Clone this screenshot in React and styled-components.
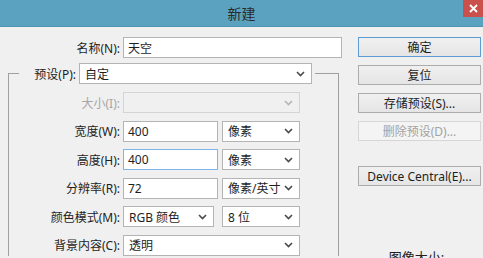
import styled, { createGlobalStyle } from "styled-components";

const Global = createGlobalStyle`
  html, body { margin: 0; padding: 0; background: #f0f0f0; overflow: hidden; }
  body { font-family: "Noto Sans", "Noto Sans CJK SC", sans-serif; font-size: 12px; color: #1e1e1e; }
`;

const Dialog = styled.div`
  width: 483px;
  height: 258px;
  background: #f0f0f0;
  overflow: hidden;
`;

const TitleBar = styled.div`
  position: relative;
  height: 27px;
  background: #5aa2bf;
  border-bottom: 1px solid #4f95b0;
  box-sizing: border-box;
  display: flex;
  align-items: center;
  justify-content: center;
  font-size: 14px;
  color: #2a2a2a;
`;

const CloseBox = styled.div`
  position: absolute;
  top: 0;
  right: 0;
  width: 20px;
  height: 17px;
  background: #c9504d;
  display: flex;
  align-items: center;
  justify-content: center;
`;

const Body = styled.div`
  display: flex;
  padding-left: 8px;
`;

const FormCol = styled.div`
  width: 335px;
  padding-top: 10px;
`;

const Row = styled.div`
  display: flex;
  align-items: center;
  gap: 3px;
  height: 21px;
`;

const Label = styled.span`
  width: ${(p) => p.$w}px;
  text-align: right;
  white-space: nowrap;
  color: ${(p) => (p.$disabled ? "#a6a6a6" : "#1e1e1e")};
`;

const Input = styled.div`
  width: ${(p) => p.$w}px;
  height: 21px;
  box-sizing: border-box;
  background: #fff;
  border: 1px solid ${(p) => (p.$focus ? "#7eb4ea" : "#b4b4b4")};
  padding-left: 4px;
  display: flex;
  align-items: center;
`;

const Pair = styled.div`
  display: flex;
  gap: ${(p) => p.$gap}px;
`;

const SelectBox = styled.div`
  width: ${(p) => p.$w}px;
  height: 21px;
  box-sizing: border-box;
  background: ${(p) => (p.$disabled ? "#f0f0f0" : "#fff")};
  border: 1px solid ${(p) => (p.$disabled ? "#d4d4d4" : "#b4b4b4")};
  padding: 0 6px 0 5px;
  display: flex;
  align-items: center;
  justify-content: space-between;
`;

const Group = styled.fieldset`
  margin: 5px 0 0 0;
  width: 331px;
  box-sizing: border-box;
  border: 1px solid #a0a0a0;
  border-bottom: none;
  padding: 8px 0 0 10px;
  display: flex;
  flex-direction: column;
  gap: 7.6px;
  min-width: 0;
`;

const Legend = styled.legend`
  padding: 0 3px;
`;

const ButtonCol = styled.div`
  margin-left: 15px;
  width: 123px;
  padding-top: 10px;
  display: flex;
  flex-direction: column;
`;

const Button = styled.div`
  height: 20px;
  box-sizing: border-box;
  margin-top: ${(p) => p.$mt ?? 0}px;
  border: 1px solid ${(p) => (p.$default ? "#5d9bd3" : p.$disabled ? "#d6d6d6" : "#acacac")};
  background: ${(p) => (p.$disabled ? "#f4f4f4" : "linear-gradient(#f0f0f0, #e5e5e5)")};
  color: ${(p) => (p.$disabled ? "#a3a3a3" : "#1e1e1e")};
  display: flex;
  align-items: center;
  justify-content: center;
  white-space: nowrap;
`;

const SizeCaption = styled.div`
  margin-top: 61px;
  text-align: center;
  font-size: 13px;
  padding-right: 6px;
`;

const Caret = ({ disabled }) => (
  <svg width="9" height="6" viewBox="0 0 9 6">
    <path d="M1 1 L4.5 4.5 L8 1" fill="none" stroke={disabled ? "#b5b5b5" : "#4a4a4a"} strokeWidth="1.6" />
  </svg>
);

const Select = ({ w, value, disabled }) => (
  <SelectBox $w={w} $disabled={disabled}>
    <span>{value}</span>
    <Caret disabled={disabled} />
  </SelectBox>
);

export default function App() {
  return (
    <Dialog>
      <Global />
      <TitleBar>
        新建
        <CloseBox>
          <svg width="9" height="9" viewBox="0 0 9 9">
            <path d="M1 1 L8 8 M8 1 L1 8" stroke="#fff" strokeWidth="1.8" />
          </svg>
        </CloseBox>
      </TitleBar>
      <Body>
        <FormCol>
          <Row>
            <Label $w={112}>名称(N):</Label>
            <Input $w={219}>天空</Input>
          </Row>
          <Group>
            <Legend>
              <Row>
                <Label $w={54}>预设(P):</Label>
                <Select w={233} value="自定" />
              </Row>
            </Legend>
            <Row>
              <Label $w={101} $disabled>大小(I):</Label>
              <Select w={177} value="" disabled />
            </Row>
            <Row>
              <Label $w={101}>宽度(W):</Label>
              <Pair $gap={4}>
                <Input $w={95}>400</Input>
                <Select w={78} value="像素" />
              </Pair>
            </Row>
            <Row>
              <Label $w={101}>高度(H):</Label>
              <Pair $gap={4}>
                <Input $w={95} $focus>400</Input>
                <Select w={78} value="像素" />
              </Pair>
            </Row>
            <Row>
              <Label $w={101}>分辨率(R):</Label>
              <Pair $gap={4}>
                <Input $w={95}>72</Input>
                <Select w={78} value="像素/英寸" />
              </Pair>
            </Row>
            <Row>
              <Label $w={101}>颜色模式(M):</Label>
              <Pair $gap={8}>
                <Select w={91} value="RGB 颜色" />
                <Select w={78} value="8 位" />
              </Pair>
            </Row>
            <Row>
              <Label $w={101}>背景内容(C):</Label>
              <Select w={177} value="透明" />
            </Row>
          </Group>
        </FormCol>
        <ButtonCol>
          <Button $default>确定</Button>
          <Button $mt={8}>复位</Button>
          <Button $mt={8}>存储预设(S)...</Button>
          <Button $mt={8} $disabled>删除预设(D)...</Button>
          <Button $mt={25}>Device Central(E)...</Button>
          <SizeCaption>图像大小:</SizeCaption>
        </ButtonCol>
      </Body>
    </Dialog>
  );
}
